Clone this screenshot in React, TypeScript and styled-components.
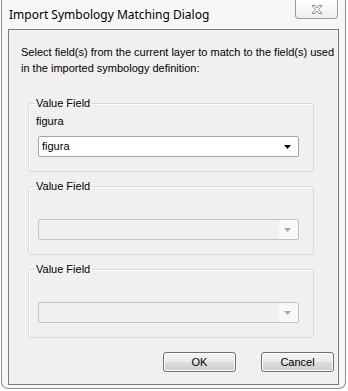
import styled, { createGlobalStyle } from 'styled-components';

const GlobalStyle = createGlobalStyle`
  html, body {
    margin: 0;
    padding: 0;
    background: #ffffff;
  }
`;

const groups = [
  { field: 'figura', value: 'figura', enabled: true },
  { field: '', value: '', enabled: false },
  { field: '', value: '', enabled: false },
];

const CloseGlyph = () => (
  <svg width="12" height="9" viewBox="0 0 12 9">
    <path
      d="M1 0.5 H4 L6 3 L8 0.5 H11 L7.5 4.5 L11 8.5 H8 L6 6 L4 8.5 H1 L4.5 4.5 Z"
      fill="#ffffff"
      stroke="#8c8c8c"
      strokeWidth="1"
      strokeLinejoin="round"
    />
  </svg>
);

const Arrow = ({ enabled }: { enabled: boolean }) => (
  <svg width="7" height="4" viewBox="0 0 7 4">
    <path d="M0 0 H7 L3.5 4 Z" fill={enabled ? '#000000' : '#a7a7a7'} />
  </svg>
);

const App = () => {
  return (
    <Screen>
      <GlobalStyle />
      <Frame>
        <TitleBar>
          <Title>Import Symbology Matching Dialog</Title>
          <CloseButton>
            <CloseGlyph />
          </CloseButton>
        </TitleBar>
        <Client>
          <Intro>
            Select field(s) from the current layer to match to the field(s) used
            <br />
            in the imported symbology definition:
          </Intro>
          {groups.map((g, i) => (
            <Group key={i}>
              <Legend>Value Field</Legend>
              <FieldName>{g.field}</FieldName>
              <Combo $enabled={g.enabled}>
                <ComboText>{g.value}</ComboText>
                <ComboButton $enabled={g.enabled}>
                  <Arrow enabled={g.enabled} />
                </ComboButton>
              </Combo>
            </Group>
          ))}
          <Buttons>
            <Button>OK</Button>
            <Button>Cancel</Button>
          </Buttons>
        </Client>
      </Frame>
    </Screen>
  );
};

export default App;

const Screen = styled.div`
  width: 348px;
  height: 391px;
  overflow: hidden;
  background: #ffffff;
`;

// Win7 basic window frame, top edge is cut off by the screenshot
const Frame = styled.div`
  margin-left: 1px;
  width: 343px;
  height: 388px;
  border: 1px solid #8e8e8e;
  border-top: none;
  border-radius: 0 0 7px 7px;
  background: #f7f7f7;
  display: flex;
  flex-direction: column;
`;

const TitleBar = styled.div`
  height: 29px;
  display: flex;
  align-items: flex-start;
  justify-content: space-between;
  padding-left: 7px;
  flex-shrink: 0;
`;

const Title = styled.div`
  font-family: 'Noto Sans', sans-serif;
  font-size: 12px;
  line-height: 16px;
  margin-top: 7px;
  color: #000000;
`;

const CloseButton = styled.div`
  width: 41px;
  height: 18px;
  margin-right: 7px;
  border: 1px solid #9c9c9c;
  border-top: none;
  border-radius: 0 0 4px 4px;
  background: linear-gradient(#ffffff, #f0f0f0);
  display: flex;
  align-items: center;
  justify-content: center;
`;

const Client = styled.div`
  margin-left: 6px;
  width: 329px;
  height: 354px;
  border: 1px solid #7b7b7b;
  background: #f0f0f0;
  display: flex;
  flex-direction: column;
  font-family: 'Liberation Sans', Arial, sans-serif;
  font-size: 11px;
  color: #000000;
`;

const Intro = styled.div`
  padding: 14px 0 0 12px;
  line-height: 16px;
  margin-bottom: 21px;
`;

const Group = styled.fieldset`
  margin: 0 0 8px 19px;
  width: 284px;
  padding: 0 0 14px 0;
  border: 1px solid #d9d9d9;
  border-radius: 3px;
  box-shadow: inset 1px 1px 0 #ffffff;
  min-inline-size: 0;
`;

const Legend = styled.legend`
  margin-left: 5px;
  padding: 0 2px;
  line-height: 13px;
`;

const FieldName = styled.div`
  height: 14px;
  line-height: 14px;
  margin: 4px 0 0 7px;
`;

const Combo = styled.div<{ $enabled: boolean }>`
  margin: 8px 0 0 9px;
  width: 259px;
  height: 19px;
  border: 1px solid ${p => (p.$enabled ? '#a5a5a5' : '#c2c2c2')};
  border-radius: 2px;
  background: ${p => (p.$enabled ? '#ffffff' : '#f0f0f0')};
  display: flex;
  align-items: center;
`;

const ComboText = styled.div`
  flex: 1;
  padding-left: 3px;
  line-height: 19px;
`;

const ComboButton = styled.div<{ $enabled: boolean }>`
  width: 17px;
  height: 19px;
  background: ${p => (p.$enabled ? '#ffffff' : '#f8f8f8')};
  display: flex;
  align-items: center;
  justify-content: center;
  padding-right: 2px;
`;

const Buttons = styled.div`
  margin-top: 6px;
  display: flex;
  justify-content: flex-end;
  gap: 25px;
  padding-right: 4px;
`;

const Button = styled.div`
  width: 71px;
  height: 18px;
  border: 1px solid #707070;
  border-radius: 3px;
  background: linear-gradient(#f2f2f2 0%, #ebebeb 50%, #dddddd 51%, #cfcfcf 100%);
  box-shadow: inset 0 0 0 1px #fcfcfc;
  display: flex;
  align-items: center;
  justify-content: center;
  line-height: 18px;
`;
